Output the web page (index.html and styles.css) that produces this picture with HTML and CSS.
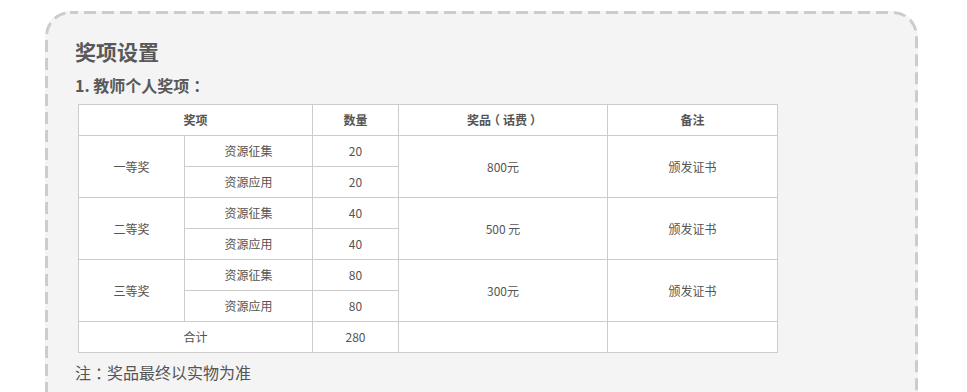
FILE: index.html
```html
<!DOCTYPE html>
<html lang="zh-CN">
<head>
<meta charset="utf-8">
<title>奖项设置</title>
<link rel="stylesheet" href="styles.css">
</head>
<body>
<div class="box">
  <h2 class="title">奖项设置</h2>
  <h3 class="subtitle">1. 教师个人奖项<span class="punct">：</span></h3>
  <table class="awards">
    <colgroup>
      <col class="c1"><col class="c2"><col class="c3"><col class="c4"><col class="c5">
    </colgroup>
    <thead>
      <tr><th colspan="2">奖项</th><th>数量</th><th>奖品<span class="paren">（</span>话费<span class="paren">）</span></th><th>备注</th></tr>
    </thead>
    <tbody>
      <tr><td rowspan="2">一等奖</td><td>资源征集</td><td>20</td><td rowspan="2">800元</td><td rowspan="2">颁发证书</td></tr>
      <tr><td>资源应用</td><td>20</td></tr>
      <tr><td rowspan="2">二等奖</td><td>资源征集</td><td>40</td><td rowspan="2">500 元</td><td rowspan="2">颁发证书</td></tr>
      <tr><td>资源应用</td><td>40</td></tr>
      <tr><td rowspan="2">三等奖</td><td>资源征集</td><td>80</td><td rowspan="2">300元</td><td rowspan="2">颁发证书</td></tr>
      <tr><td>资源应用</td><td>80</td></tr>
      <tr><td colspan="2">合计</td><td>280</td><td></td><td></td></tr>
    </tbody>
  </table>
  <p class="note">注<span class="punct">：</span>奖品最终以实物为准</p>
</div>
</body>
</html>
```
FILE: styles.css
```css
html, body {
  margin: 0;
  padding: 0;
  background: #ffffff;
}
body {
  font-family: "Noto Sans CJK SC", "Noto Sans", sans-serif;
  color: #555;
}
.box {
  margin: 11px 0 0 45px;
  width: 873px;
  height: 420px;
  border-radius: 25px;
  background-color: #f4f4f4;
  background-image: url("data:image/svg+xml,%3Csvg xmlns='http://www.w3.org/2000/svg' width='873' height='420'%3E%3Crect x='1.5' y='1.5' width='870' height='417' rx='23.5' ry='23.5' fill='none' stroke='%23cccccc' stroke-width='3' stroke-dasharray='12 6' stroke-dashoffset='4'/%3E%3C/svg%3E");
  background-repeat: no-repeat;
  padding: 26px 0 0 30px;
  box-sizing: border-box;
}
.title {
  margin: 0;
  font-size: 21px;
  line-height: 28px;
  font-weight: bold;
  color: #595959;
}
.subtitle {
  margin: 8px 0 0 0;
  font-size: 16px;
  line-height: 24px;
  font-weight: bold;
  color: #595959;
}
.punct {
  font-feature-settings: "halt" 1;
  padding: 0 0.25em;
}
.paren {
  font-feature-settings: "halt" 1;
  padding: 0 0.25em;
}
.awards {
  margin: 7px 0 0 3px;
  border-collapse: collapse;
  background: #fff;
  table-layout: fixed;
  width: 700px;
  font-size: 12px;
  color: #555;
}
.c1 { width: 106px; }
.c2 { width: 128px; }
.c3 { width: 86px; }
.c4 { width: 209px; }
.c5 { width: 170px; }
.awards th,
.awards td {
  border: 1px solid #cccccc;
  height: 30px;
  padding: 0;
  text-align: center;
  vertical-align: middle;
  line-height: 16px;
  box-sizing: border-box;
}
.awards th {
  font-weight: bold;
}
.awards tr {
  height: 31px;
}
.note {
  margin: 7px 0 0 0;
  font-size: 16px;
  line-height: 24px;
  color: #555;
}
```
